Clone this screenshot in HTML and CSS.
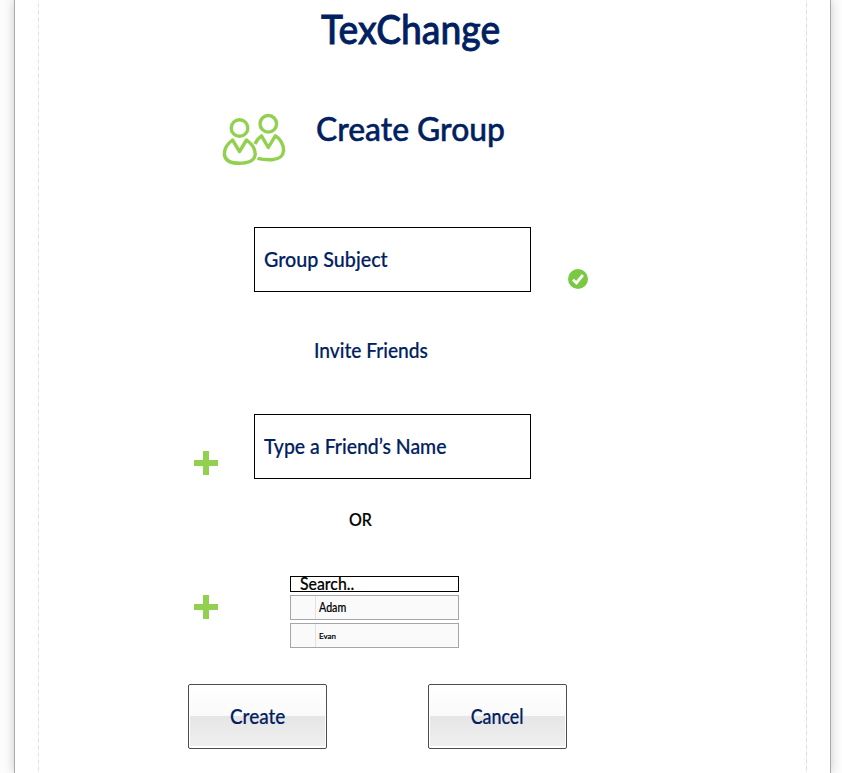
FILE: index.html
```html
<!DOCTYPE html>
<html lang="en">
<head>
<meta charset="utf-8">
<title>TexChange</title>
<link rel="stylesheet" href="styles.css">
</head>
<body>
<main class="page">
  <div class="sheet">
    <h1 class="brand"><span>TexChange</span></h1>
    <header class="heading">
      <svg class="people" width="64" height="54" viewBox="0 0 64 54" fill="none" stroke="#92d050" stroke-width="3.4" stroke-linejoin="round">
        <circle cx="17.5" cy="15" r="8.3"/>
        <circle cx="46.3" cy="10.8" r="8.3"/>
        <path d="M10.5 27 L17.5 38.500 L24.5 27 C30 31 33.500 36.500 33.200 41.500 C32.500 48 27 50.300 17.500 50.300 C8 50.300 3 48 2.400 41.500 C2.200 36.500 5 31 10.500 27Z"/>
        <path d="M33 31 C34.500 27.500 36.500 24.800 39.500 22.800 L46.300 34.500 L53.300 22.800 C58 25.500 61.600 31.500 61.600 37.500 C61 44 57 46 50 46.700 C44 46.900 40 46.500 35.500 45.300"/>
      </svg>
      <h2><span>Create Group</span></h2>
    </header>
    <div class="row subject">
      <div class="field"><span class="t-subject">Group Subject</span></div>
      <svg class="check" width="20" height="20" viewBox="0 0 20 20"><circle cx="10" cy="10" r="10" fill="#7ac943"/><path d="M5 10.700 L8.400 13.900 L14.900 6" fill="none" stroke="#fff" stroke-width="2.800"/></svg>
    </div>
    <p class="invite"><span>Invite Friends</span></p>
    <div class="row friend">
      <i class="plus"></i>
      <div class="field"><span class="t-friend">Type a Friend’s Name</span></div>
    </div>
    <p class="or"><span>OR</span></p>
    <div class="row search">
      <i class="plus"></i>
      <div class="list">
        <div class="query"><span>Search..</span></div>
        <div class="item"><span class="t-adam">Adam</span></div>
        <div class="item"><span class="t-evan">Evan</span></div>
      </div>
    </div>
    <div class="actions">
      <button><span class="t-create">Create</span></button>
      <button><span class="t-cancel">Cancel</span></button>
    </div>
  </div>
</main>
</body>
</html>
```
FILE: styles.css
```css
* { box-sizing: border-box; }
body {
  margin: 0;
  height: 773px;
  overflow: hidden;
  background: #fcfcfc;
  color: #002060;
  font-family: Lato, "Liberation Sans", sans-serif;
  font-weight: 500;
  -webkit-text-stroke: .012em;
}
h1, h2, p { margin: 0; font-weight: 500; white-space: nowrap; }
span { display: inline-block; transform-origin: 0 50%; white-space: nowrap; }
.page {
  width: 817px;
  height: 773px;
  margin-left: 14px;
  padding: 0 23px;
  background: #fff;
  border: solid #a3abb5;
  border-width: 0 1px;
  box-shadow: 0 0 10px rgba(0, 0, 0, .2);
}
.sheet {
  width: 769px;
  height: 773px;
  background:
    repeating-linear-gradient(#f5f5f5 0 4px, #dedede 4px 7px, #dedede 8px) 0 0 / 1px 7px repeat-y,
    repeating-linear-gradient(#f5f5f5 0 3px, #dedede 3px 7px) 100% 0 / 1px 7px repeat-y;
}
.brand { height: 113px; padding-left: 283px; font-size: 41px; line-height: 58px; }
.brand span { transform: scaleX(.908); -webkit-text-stroke: .8px; }
.heading { display: flex; height: 114px; padding-left: 184px; }
h2 { margin-left: 30px; font-size: 33px; line-height: 31px; }
h2 span { transform: scaleX(.965); -webkit-text-stroke: .5px; }
.row { display: flex; }
.subject { height: 102px; padding-left: 216px; }
.field {
  display: flex;
  align-items: center;
  width: 277px;
  height: 65px;
  padding: 0 0 2px 9px;
  border: 1px solid #000;
  font-size: 21px;
}
.t-subject { transform: scaleX(.938); }
.t-friend { transform: scaleX(.925); }
.check { margin: 42px 0 0 37px; }
.invite { height: 85px; padding-left: 276px; font-size: 21px; line-height: 42px; }
.invite span { transform: scaleX(.912); }
.friend { height: 94px; padding-left: 156px; }
.plus {
  width: 24px;
  height: 24px;
  background:
    linear-gradient(#92d050, #92d050) 50% 50% / 6px 24px no-repeat,
    linear-gradient(#92d050, #92d050) 50% 50% / 24px 6px no-repeat;
}
.friend .plus { margin: 37px 36px 0 0; }
.or { height: 68px; padding-left: 311px; color: #000; font-size: 17px; line-height: 24px; }
.or span { transform: scaleX(.94); }
.search { height: 108px; padding-left: 156px; color: #000; }
.search .plus { margin: 19px 72px 0 0; }
.list { width: 169px; }
.query { height: 16px; padding-left: 9px; border: 1px solid #000; font-size: 17px; line-height: 14px; }
.query span { transform: scaleX(.93); }
.item {
  height: 25px;
  margin-top: 3px;
  padding-left: 28px;
  border: 1px solid #a6a6a6;
  background: linear-gradient(#e2e2e2, #e2e2e2) 24px 0 / 1px 100% no-repeat, #fafafa;
  line-height: 22px;
}
.item span { vertical-align: top; }
.t-adam { font-size: 14px; transform: scaleX(.76); }
.t-evan { font-size: 8px; line-height: 25px; }
.actions { display: flex; gap: 101px; padding-left: 150px; }
button {
  display: block;
  width: 139px;
  height: 65px;
  padding: 0 0 2px;
  border: 1px solid #4d4d4d;
  border-radius: 2px;
  background: linear-gradient(#fff, #fafafa 31px, #e6e6e6 31px, #efefef) 1px 0 / 135px 61px no-repeat, #fff;
  color: #002060;
  font: 500 21px Lato, "Liberation Sans", sans-serif;
}
button span { transform-origin: 50% 50%; }
.t-create { transform: scaleX(.9); }
.t-cancel { transform: scaleX(.85); }
```
